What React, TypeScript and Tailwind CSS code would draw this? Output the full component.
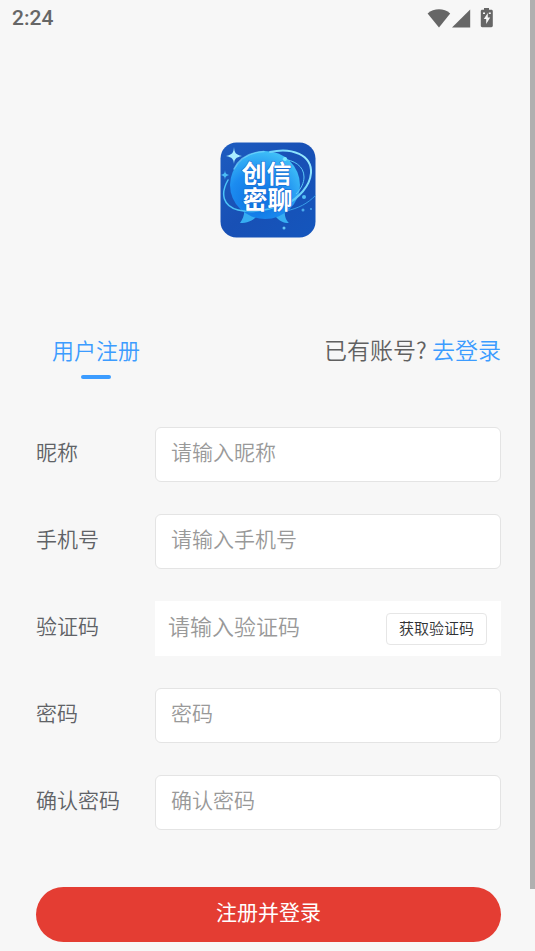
import React from "react";

function StatusBar() {
  return (
    <header className="flex h-9 items-center justify-between pr-10 pl-3 text-[#666]">
      <time className="pt-0.5 font-[Roboto,sans-serif] text-[21px] font-medium">2:24</time>
      <div className="flex items-center">
        <svg className="h-[19px] w-6" viewBox="0 0 24 19" fill="currentColor" aria-label="Wi-Fi">
          <path d="M.6 4.4C7-1 17-1 23.2 4.4L12 18.6Z" />
        </svg>
        <svg className="h-[19px] w-5" viewBox="0 0 20 19" fill="currentColor" aria-label="信号">
          <path d="M19.2.4V18.6H1Z" />
        </svg>
        <svg className="ml-2 h-5 w-4" viewBox="0 0 16 20" aria-label="电池">
          <path
            fill="currentColor"
            d="M5 0h5v1.800h2.400c.8 0 1.400.6 1.400 1.400v14.600c0 .8-.6 1.400-1.400 1.400H3.200c-.8 0-1.400-.6-1.400-1.400V3.200c0-.8.6-1.400 1.400-1.400H5Z"
          />
          <path fill="#f7f7f7" d="M8.800 5 4.800 11h2.400v5l4-6.500H8.800Z" />
          <path fill="#f7f7f7" d="M4 4.500h2v1.500H4ZM9.800 4.500h2v1.500h-2Z" />
        </svg>
      </div>
    </header>
  );
}

function Logo() {
  return (
    <svg className="size-24" viewBox="0 0 96 96" role="img" aria-label="创信密聊">
      <defs>
        <linearGradient id="tile" x1="0" y1="0" x2="1" y2="1">
          <stop offset="0" stopColor="#1d5cc0" />
          <stop offset="0.5" stopColor="#1850b5" />
          <stop offset="1" stopColor="#1456bd" />
        </linearGradient>
        <radialGradient id="bubble" cx="0.4" cy="0.72" r="0.75">
          <stop offset="0" stopColor="#0c6fe0" />
          <stop offset="0.55" stopColor="#1c8cf0" />
          <stop offset="1" stopColor="#42c3f8" />
        </radialGradient>
        <linearGradient id="ring" x1="0" y1="1" x2="1" y2="0">
          <stop offset="0" stopColor="#36b6f5" />
          <stop offset="1" stopColor="#a5efff" />
        </linearGradient>
        <clipPath id="tileShape">
          <rect x="0.500" y="0.500" width="95" height="95" rx="16" />
        </clipPath>
      </defs>
      <g clipPath="url(#tileShape)">
        <rect width="96" height="96" fill="url(#tile)" />
        <path d="M24 66c1 6-1 11-4 15 7 0 12-2 16-6l20 0c4 4 7 6 13 6-3-3-5-7-4-15Z" fill="#36adf2" />
        <ellipse cx="45" cy="43" rx="35" ry="34" fill="url(#bubble)" />
        <path d="M14 27C20 15 32 10 44 9.500" fill="none" stroke="#78dcff" strokeWidth="1.500" strokeLinecap="round" opacity="0.7" />
        <path
          d="M8 38C0 52 3 64 18 68c12 3 28 1 40-4"
          fill="none"
          stroke="#4cc3f7"
          strokeWidth="1.500"
          strokeLinecap="round"
        />
        <path
          d="M50 10c22-5 42 3 41 21-1 13-12 25-26 32"
          fill="none"
          stroke="url(#ring)"
          strokeWidth="2"
          strokeLinecap="round"
        />
        <path d="M62 17c12 1 22 7 22 18 0 6-3 12-8 17" fill="none" stroke="#5cc8f7" strokeWidth="1" />
        <path d="M96 53c-9 9-17 13-30 16" fill="none" stroke="#399ee8" strokeWidth="1" />
        <path d="M14 5c.5 6 1.500 7.500 8 9-6.500 1.500-7.500 3-8 8-.5-5-1.500-6.500-8-8 6.500-1.500 7.500-3 8-9Z" fill="#a9edff" />
        <path d="M5 28c.3 3 .7 4 4 5-3.300 1-3.700 2-4 5-.3-3-.7-4-4-5 3.300-1 3.700-2 4-5Z" fill="#4cbcf5" />
        <circle cx="65" cy="17" r="2" fill="#7eeaff" />
        <circle cx="84" cy="55" r="2" fill="#54bff5" />
        <circle cx="83" cy="68" r="1.500" fill="#4aa9ec" />
        <circle cx="91" cy="67" r="1" fill="#4aa9ec" />
        <circle cx="64" cy="86" r="1.500" fill="#63c5f5" />
        <text
          fontFamily="'Noto Sans CJK SC', sans-serif"
          fontWeight="700"
          fontSize="25"
          textAnchor="middle"
          stroke="#1767cf"
          strokeWidth="1"
          paintOrder="stroke"
          fill="#fff"
        >
          <tspan x="46.500" y="41">
            创信
          </tspan>
          <tspan x="47.500" y="67">
            密聊
          </tspan>
        </text>
      </g>
    </svg>
  );
}

type FieldProps = { id: string; label: string; placeholder: string; type?: string };

function Field({ id, label, placeholder, type = "text" }: FieldProps) {
  return (
    <div className="flex h-[55px] items-center">
      <label htmlFor={id} className="w-[119px] shrink-0 pb-1.5 text-[21px] text-[#606266]">
        {label}
      </label>
      <input
        id={id}
        type={type}
        placeholder={placeholder}
        className="h-full min-w-0 flex-1 rounded-md border border-[#e4e4e4] bg-white px-[15px] pb-2 text-[21px] text-[#303133] outline-none placeholder:text-[#999]"
      />
    </div>
  );
}

export default function App() {
  return (
    <div className="relative min-h-screen bg-[#f7f7f7] pb-2 font-['Noto_Sans_CJK_SC',sans-serif] font-[350]">
      <StatusBar />
      <main className="pr-[34px] pl-9">
        <div className="flex justify-center pt-[106px] pr-0.5">
          <Logo />
        </div>

        <div className="mt-[93px] flex items-start justify-between">
          <h1 className="ml-4 flex flex-col items-center gap-2 text-[22px] leading-9 font-[350] text-[#3c9cff]">
            用户注册
            <span className="h-1 w-[30px] rounded-full bg-[#3c9cff]" />
          </h1>
          <p className="text-[23px] leading-9 text-[#606060]">
            已有账号?{" "}
            <a href="#login" className="text-[#3c9cff]">
              去登录
            </a>
          </p>
        </div>

        <form className="mt-12 flex flex-col gap-8" onSubmit={(e) => e.preventDefault()}>
          <Field id="nickname" label="昵称" placeholder="请输入昵称" />
          <Field id="phone" label="手机号" placeholder="请输入手机号" type="tel" />
          <div className="flex h-[55px] items-center">
            <label htmlFor="code" className="w-[119px] shrink-0 pb-1.5 text-[21px] text-[#606266]">
              验证码
            </label>
            <div className="flex h-full min-w-0 flex-1 items-center bg-white pr-3.5 pl-[13px]">
              <input
                id="code"
                placeholder="请输入验证码"
                className="h-full min-w-0 flex-1 pb-2 text-[22px] text-[#303133] outline-none placeholder:text-[#999]"
              />
              <button
                type="button"
                className="h-8 shrink-0 rounded border border-[#e6e6e6] bg-white px-3 pb-0.5 text-[15px] leading-5 text-[#303133]"
              >
                获取验证码
              </button>
            </div>
          </div>
          <Field id="password" label="密码" placeholder="密码" type="password" />
          <Field id="confirm" label="确认密码" placeholder="确认密码" type="password" />
          <button type="submit" className="mt-[25px] h-[55px] rounded-full bg-[#e43d33] pb-1.5 text-[21px] font-normal text-white">
            注册并登录
          </button>
        </form>
      </main>
      <div className="absolute top-0 right-0 bottom-[62px] w-[5px] bg-[#b0b0b0]" />
    </div>
  );
}
